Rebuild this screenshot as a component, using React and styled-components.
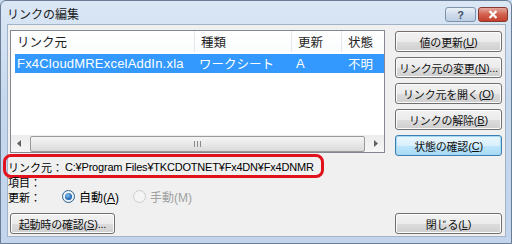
import styled, { createGlobalStyle, css } from "styled-components";

const GlobalStyle = createGlobalStyle`
  html, body {
    margin: 0;
    padding: 0;
    background: #c9daee;
  }
  * {
    box-sizing: border-box;
  }
`;

const Window = styled.div`
  width: 512px;
  height: 244px;
  display: flex;
  flex-direction: column;
  padding: 0 5px 6px 6px;
  background: linear-gradient(#dbe7f5, #c6d8ee 40%, #c2d5ec);
  border: 1px solid #6b7d95;
  border-radius: 6px 6px 0 0;
  font-family: "Liberation Sans", "Noto Sans CJK JP", sans-serif;
  font-size: 12px;
  color: #000;
  overflow: hidden;
`;

const TitleBar = styled.div`
  height: 23px;
  display: flex;
  align-items: flex-start;
  justify-content: space-between;
`;

const Title = styled.div`
  padding-top: 4px;
  font-size: 12px;
  color: #1b1b1b;
`;

const CaptionButtons = styled.div`
  display: flex;
  gap: 2px;
  margin-top: 6px;
  margin-right: -2px;
`;

const CaptionButton = styled.div`
  width: ${(p) => p.$w}px;
  height: 15px;
  display: flex;
  align-items: center;
  justify-content: center;
  border-radius: 3px;
  font-size: 11px;
  font-weight: bold;
  ${(p) =>
    p.$close
      ? css`
          background: linear-gradient(#e5a89c, #d2614f 50%, #c4402c);
          border: 1px solid #863a2d;
          color: #fff;
        `
      : css`
          background: linear-gradient(#e9f0f8, #cfdcec 50%, #bccde3);
          border: 1px solid #8093ad;
          color: #3d4f66;
        `}
`;

const Client = styled.div`
  flex: 1;
  display: flex;
  flex-direction: column;
  background: #f0f0f0;
  border: 1px solid #a3b3c7;
  padding: 5px 3px 1px 2px;
`;

const MainRow = styled.div`
  display: flex;
  gap: 10px;
`;

const ListBox = styled.div`
  width: 375px;
  height: 123px;
  display: flex;
  flex-direction: column;
  background: #fff;
  border: 1px solid #828790;
`;

const Header = styled.div`
  height: 21px;
  display: flex;
  background: linear-gradient(#fff, #fafbfc);
`;

const HeadCell = styled.div`
  width: ${(p) => p.$w}px;
  flex: ${(p) => (p.$w ? "none" : 1)};
  display: flex;
  align-items: center;
  padding-left: 6px;
  font-size: 12.5px;
  color: #1e1e1e;
  border-right: ${(p) => (p.$last ? "none" : "1px solid #e4e7ec")};
`;

const Rows = styled.div`
  flex: 1;
  padding: 2px 0 0 4px;
`;

const Row = styled.div`
  height: 19px;
  display: flex;
  align-items: center;
  background: ${(p) => (p.$selected ? "#3399ff" : "transparent")};
  color: ${(p) => (p.$selected ? "#fff" : "#000")};
`;

const Cell = styled.div`
  width: ${(p) => p.$w}px;
  flex: ${(p) => (p.$w ? "none" : 1)};
  padding-left: ${(p) => p.$pad || 2}px;
  white-space: nowrap;
  overflow: hidden;
  font-size: ${(p) => (p.$latin ? "13px" : "12.5px")};
  letter-spacing: ${(p) => (p.$latin ? "0.2px" : "0")};
`;

const ScrollBar = styled.div`
  height: 17px;
  display: flex;
  align-items: center;
  background: linear-gradient(#ececec, #f6f6f6);
`;

const ScrollArrow = styled.div`
  width: 17px;
  height: 17px;
  display: flex;
  align-items: center;
  justify-content: center;
`;

const ScrollThumb = styled.div`
  flex: 1;
  height: 16px;
  margin: 0 2px;
  display: flex;
  align-items: center;
  justify-content: center;
  border: 1px solid #9a9a9a;
  border-radius: 2px;
  background: linear-gradient(#f5f5f5, #e9e9e9 50%, #d9d9d9);
`;

const ButtonColumn = styled.div`
  display: flex;
  flex-direction: column;
  gap: 5px;
  margin-top: 1px;
`;

const Button = styled.div`
  width: ${(p) => p.$w || 107}px;
  height: 21px;
  display: flex;
  align-items: center;
  justify-content: center;
  font-size: 11px;
  letter-spacing: -0.2px;
  color: #111;
  border-radius: 3px;
  white-space: nowrap;
  ${(p) =>
    p.$focused
      ? css`
          border: 1px solid #3c7fb1;
          background: linear-gradient(#eaf6fd, #d9f0fc 50%, #bee6fd 51%, #a7d9f5);
          box-shadow: inset 0 0 0 1px #a6d8f4;
        `
      : css`
          border: 1px solid #707070;
          background: linear-gradient(#f2f2f2, #ebebeb 50%, #dddddd 51%, #cfcfcf);
          box-shadow: inset 0 0 0 1px #fbfbfb;
        `}
`;

const Key = styled.span`
  text-decoration: underline;
`;

const Info = styled.div`
  display: flex;
  flex-direction: column;
  margin: 3px 0 0 -2px;
`;

const InfoLine = styled.div`
  position: relative;
  height: 15px;
  display: flex;
  align-items: center;
  white-space: nowrap;
  font-size: 11px;
`;

const Label = styled.span`
  flex: none;
  width: ${(p) => (p.$w ? `${p.$w}px` : "auto")};
`;

const PathText = styled.span`
  font-size: 11px;
  letter-spacing: -0.2px;
  margin-left: 2px;
`;

const Highlight = styled.div`
  position: absolute;
  left: -5px;
  top: -5px;
  width: 321px;
  height: 24px;
  border: 3px solid #e2121c;
  border-radius: 8px;
  pointer-events: none;
`;

const Radio = styled.span`
  width: 13px;
  height: 13px;
  border-radius: 50%;
  display: inline-flex;
  align-items: center;
  justify-content: center;
  flex: none;
  ${(p) =>
    p.$disabled
      ? css`
          border: 1px solid #cdcdcd;
          background: #f4f4f4;
        `
      : css`
          border: 1px solid #2c628b;
          background: radial-gradient(circle at 50% 40%, #fff, #dbe6f2);
        `}
`;

const RadioDot = styled.span`
  width: 7px;
  height: 7px;
  border-radius: 50%;
  background: radial-gradient(circle at 40% 35%, #7fc0f0, #1a60a8 70%);
`;

const RadioText = styled.span`
  margin-left: 4px;
  font-size: 12px;
  color: ${(p) => (p.$disabled ? "#a0a0a0" : "#000")};
`;

const RadioGap = styled.span`
  width: 14px;
  flex: none;
`;

const BottomRow = styled.div`
  margin-top: auto;
  margin-bottom: 1px;
  display: flex;
  justify-content: space-between;
`;

const Triangle = ({ dir }) => (
  <svg width="5" height="7" viewBox="0 0 5 7">
    <path
      d={dir === "left" ? "M4 0 L0 3.5 L4 7 Z" : "M1 0 L5 3.5 L1 7 Z"}
      fill="#606060"
    />
  </svg>
);

const sideButtons = [
  { id: 1, text: "値の更新(", key: "U", rest: ")" },
  { id: 2, text: "リンク元の変更(", key: "N", rest: ")..." },
  { id: 3, text: "リンク元を開く(", key: "O", rest: ")" },
  { id: 4, text: "リンクの解除(", key: "B", rest: ")" },
  { id: 5, text: "状態の確認(", key: "C", rest: ")", focused: true },
];

export default function App() {
  return (
    <>
      <GlobalStyle />
      <Window>
        <TitleBar>
          <Title>リンクの編集</Title>
          <CaptionButtons>
            <CaptionButton $w={31}>?</CaptionButton>
            <CaptionButton $w={30} $close>
              <svg width="10" height="9" viewBox="0 0 10 9">
                <path d="M1.5 1 L8.5 8 M8.5 1 L1.5 8" stroke="#fff" strokeWidth="2.2" />
              </svg>
            </CaptionButton>
          </CaptionButtons>
        </TitleBar>
        <Client>
          <MainRow>
            <ListBox>
              <Header>
                <HeadCell $w={184}>リンク元</HeadCell>
                <HeadCell $w={97}>種類</HeadCell>
                <HeadCell $w={50}>更新</HeadCell>
                <HeadCell $last>状態</HeadCell>
              </Header>
              <Rows>
                <Row $selected>
                  <Cell $w={180} $latin>Fx4CloudMRExcelAddIn.xla</Cell>
                  <Cell $w={97} $pad={4}>ワークシート</Cell>
                  <Cell $w={50} $pad={4} $latin>A</Cell>
                  <Cell $pad={6}>不明</Cell>
                </Row>
              </Rows>
              <ScrollBar>
                <ScrollArrow>
                  <Triangle dir="left" />
                </ScrollArrow>
                <ScrollThumb>
                  <svg width="7" height="6" viewBox="0 0 7 6">
                    <path d="M0.5 0 V6 M3.5 0 V6 M6.5 0 V6" stroke="#8a8a8a" strokeWidth="1" />
                  </svg>
                </ScrollThumb>
                <ScrollArrow>
                  <Triangle dir="right" />
                </ScrollArrow>
              </ScrollBar>
            </ListBox>
            <ButtonColumn>
              {sideButtons.map((b) => (
                <Button key={b.id} $focused={b.focused}>
                  {b.text}
                  <Key>{b.key}</Key>
                  {b.rest}
                </Button>
              ))}
            </ButtonColumn>
          </MainRow>
          <Info>
            <InfoLine>
              <Label>リンク元：</Label>
              <PathText>C:¥Program Files¥TKCDOTNET¥Fx4DN¥Fx4DNMR</PathText>
              <Highlight />
            </InfoLine>
            <InfoLine>
              <Label>項目：</Label>
            </InfoLine>
            <InfoLine>
              <Label $w={54}>更新：</Label>
              <Radio>
                <RadioDot />
              </Radio>
              <RadioText>
                自動(<Key>A</Key>)
              </RadioText>
              <RadioGap />
              <Radio $disabled />
              <RadioText $disabled>手動(M)</RadioText>
            </InfoLine>
          </Info>
          <BottomRow>
            <Button $w={105}>
              起動時の確認(<Key>S</Key>)...
            </Button>
            <Button>
              閉じる(<Key>L</Key>)
            </Button>
          </BottomRow>
        </Client>
      </Window>
    </>
  );
}
